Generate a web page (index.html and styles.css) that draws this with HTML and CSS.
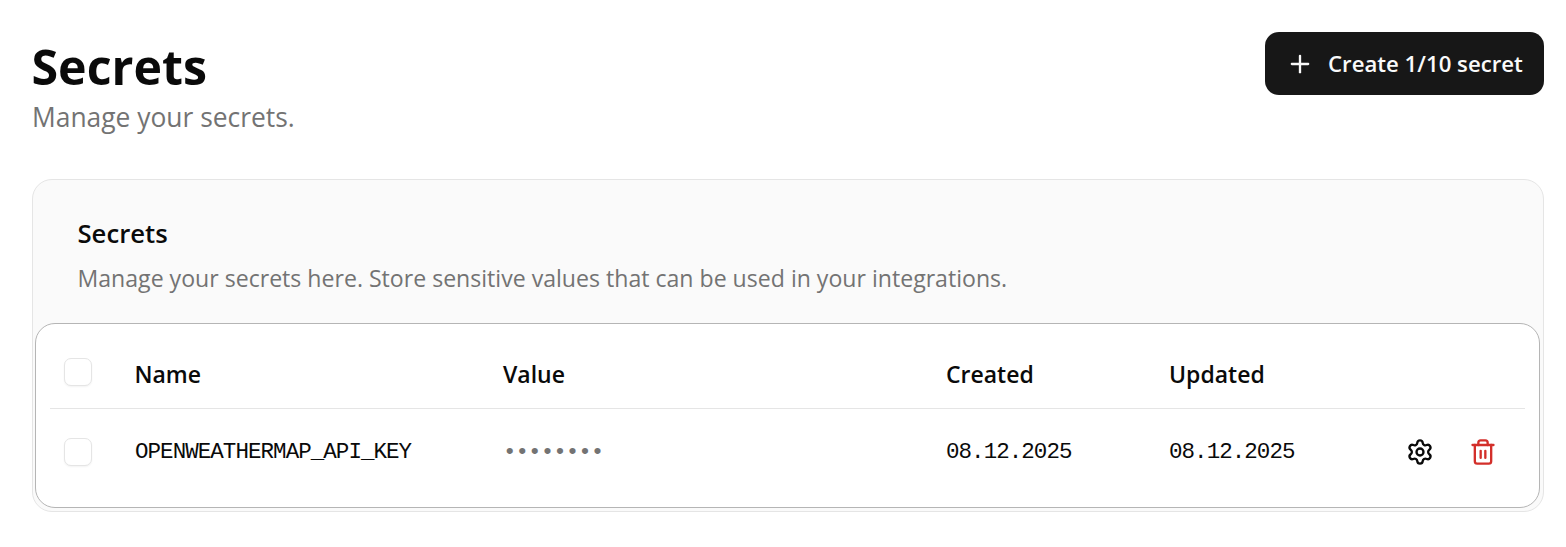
FILE: index.html
```html
<!DOCTYPE html>
<html lang="en">
<head>
<meta charset="utf-8">
<title>Secrets</title>
<link rel="stylesheet" href="styles.css">
</head>
<body>
<main class="page">
  <header class="head">
    <div class="head-text">
      <h1 class="title">Secrets</h1>
      <p class="subtitle">Manage your secrets.</p>
    </div>
    <button class="create" type="button">
      <svg class="plus" viewBox="0 0 24 24" width="28" height="28" fill="none" stroke="currentColor" stroke-width="2" stroke-linecap="round" stroke-linejoin="round"><path d="M5 12h14"/><path d="M12 5v14"/></svg>
      <span>Create 1/10 secret</span>
    </button>
  </header>
  <section class="card">
    <div class="card-head">
      <h2 class="card-title">Secrets</h2>
      <p class="card-desc">Manage your secrets here. Store sensitive values that can be used in your integrations.</p>
    </div>
    <div class="table-wrap">
      <div class="row row-head">
        <span class="check"></span>
        <span>Name</span>
        <span>Value</span>
        <span>Created</span>
        <span>Updated</span>
        <span></span>
      </div>
      <div class="row row-body">
        <span class="check"></span>
        <span class="mono">OPENWEATHERMAP_API_KEY</span>
        <span class="mono muted">••••••••</span>
        <span class="mono">08.12.2025</span>
        <span class="mono">08.12.2025</span>
        <span class="actions">
          <svg class="icon" viewBox="0 0 24 24" width="28" height="28" fill="none" stroke="currentColor" stroke-width="2" stroke-linecap="round" stroke-linejoin="round"><path d="M9.671 4.136a2.34 2.34 0 0 1 4.659 0 2.34 2.34 0 0 0 3.319 1.915 2.34 2.34 0 0 1 2.33 4.033 2.34 2.34 0 0 0 0 3.831 2.34 2.34 0 0 1-2.33 4.033 2.34 2.34 0 0 0-3.319 1.915 2.34 2.34 0 0 1-4.659 0 2.34 2.34 0 0 0-3.32-1.915 2.34 2.34 0 0 1-2.33-4.033 2.34 2.34 0 0 0 0-3.831A2.34 2.34 0 0 1 6.35 6.051a2.34 2.34 0 0 0 3.319-1.915"/><circle cx="12" cy="12" r="3"/></svg>
          <svg class="icon danger" viewBox="0 0 24 24" width="28" height="28" fill="none" stroke="currentColor" stroke-width="2" stroke-linecap="round" stroke-linejoin="round"><path d="M10 11v6"/><path d="M14 11v6"/><path d="M19 6v14a2 2 0 0 1-2 2H7a2 2 0 0 1-2-2V6"/><path d="M3 6h18"/><path d="M8 6V4a2 2 0 0 1 2-2h4a2 2 0 0 1 2 2v2"/></svg>
        </span>
      </div>
    </div>
  </section>
</main>
</body>
</html>
```
FILE: styles.css
```css
* { box-sizing: border-box; }
html, body { margin: 0; background: #fff; }
body { font-family: "Open Sans", "Noto Sans", sans-serif; color: #0a0a0a; }
.page { padding: 32px 22px 0 32px; }
.head { display: flex; justify-content: space-between; align-items: flex-start; height: 147px; }
.title { margin: 0 0 0 -0.5px; font-size: 48.3px; line-height: 68px; font-weight: 700; height: 70px; }
.subtitle { margin: 0; font-size: 26.4px; line-height: 30px; color: #737373; }
.create { display: flex; align-items: center; gap: 14px; width: 279px; height: 63px; padding: 0 20px 0 21px; border: 0; border-radius: 14px; background: #171717; color: #fafafa; font: 600 22.2px "Open Sans", sans-serif; }
.card { height: 333px; border: 1px solid #e5e5e5; border-radius: 20px; background: #fafafa; padding: 0 3px 3px 2px; display: flex; flex-direction: column; }
.card-head { height: 143px; padding: 33px 43px 0 42.5px; }
.card-title { margin: 0; font-size: 25.7px; line-height: 42px; font-weight: 600; }
.card-desc { margin: 0; font-size: 23.1px; line-height: 46px; color: #737373; }
.table-wrap { height: 185px; border: 1px solid #b5b5b5; border-radius: 20px; background: #fff; padding: 0 14px; }
.row { display: grid; grid-template-columns: 85px 368px 443px 223px 1fr 134px; align-items: center; }
.row-head { height: 85px; border-bottom: 1px solid #e5e5e5; font-size: 23px; font-weight: 600; padding-top: 16px; }
.row-head .check { margin-bottom: 4px; }
.row-body { height: 85px; }
.row-head span:nth-child(2) { margin-left: -0.5px; }
.check { width: 28px; height: 28px; margin-left: 14px; background: #fff; border: 1px solid #e5e5e5; border-radius: 7px; box-shadow: 0 1px 2px rgba(0,0,0,.05); }
.mono { font-family: "Liberation Mono", monospace; font-size: 22.5px; letter-spacing: -0.95px; }
.muted { color: #737373; }
.actions { display: flex; gap: 35px; align-items: center; padding-left: 15px; }
.icon { display: block; }
.danger { color: #d32f2a; }
```
